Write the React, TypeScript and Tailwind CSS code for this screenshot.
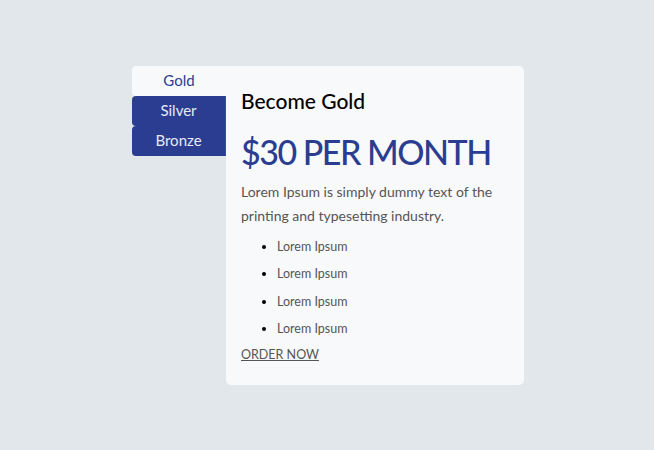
import React from 'react';

const tabs = ['Gold', 'Silver', 'Bronze'];
const items = ['Lorem Ipsum', 'Lorem Ipsum', 'Lorem Ipsum', 'Lorem Ipsum'];

export default function App() {
  const active = 'Gold';

  return (
    <div
      className="flex h-[450px] w-full items-center justify-center bg-[#e2e7eb]"
      style={{ fontFamily: 'Lato, "Noto Sans", sans-serif' }}
    >
      <div className="ml-[2px] flex items-start">
        {/* Tabs */}
        <div className="flex w-[94px] flex-col">
          {tabs.map((tab) => (
            <button
              key={tab}
              className={
                tab === active
                  ? 'h-[30px] rounded-l-[4px] bg-[#f8f9fb] text-[15px] text-[#2b3d91]'
                  : 'h-[30px] rounded-l-[4px] border-r border-[#3a4c9c] bg-[#2b3d91] text-[15px] text-[#e6e9f4]'
              }
            >
              {tab}
            </button>
          ))}
        </div>

        {/* Content */}
        <div className="h-[319px] w-[298px] rounded-r-[5px] rounded-bl-[5px] bg-[#f8f9fb] px-[15px] pt-[22px]">
          <h2 className="text-[21px] font-medium leading-[26px] text-black">Become Gold</h2>
          <p className="mt-[15px] text-[34px] font-medium leading-[46px] tracking-[-1.5px] text-[#2b3d91]">
            $30 PER MONTH
          </p>
          <p className="mt-[5px] text-[14px] leading-[24px] text-[#555]">
            Lorem Ipsum is simply dummy text of the printing and typesetting industry.
          </p>
          <ul className="mt-[5px] list-disc pl-[36px] text-[12.5px] text-[#555] marker:text-black">
            {items.map((item, i) => (
              <li key={i} className="leading-[27.5px]">
                {item}
              </li>
            ))}
          </ul>
          <a href="#" className="block w-fit text-[12.5px] leading-[24px] text-[#555] underline">
            ORDER NOW
          </a>
        </div>
      </div>
    </div>
  );
}
